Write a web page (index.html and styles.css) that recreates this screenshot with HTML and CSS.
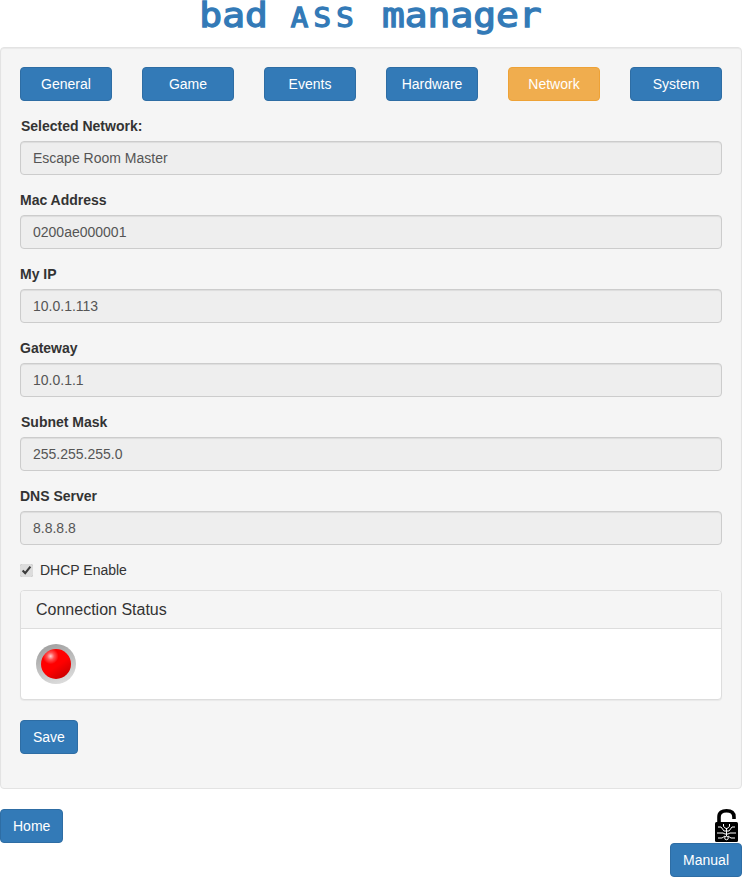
FILE: index.html
```html
<!DOCTYPE html>
<html lang="en">
<head>
<meta charset="utf-8">
<title>Bad Ass Manager</title>
<link rel="stylesheet" href="styles.css">
</head>
<body>
<h1 class="logo"><span class="logo-text">bad <span class="logo-caps">ass</span> manager</span></h1>
<main class="well">
  <nav class="tabs">
    <button class="btn" type="button">General</button>
    <button class="btn" type="button">Game</button>
    <button class="btn" type="button">Events</button>
    <button class="btn" type="button">Hardware</button>
    <button class="btn btn-active" type="button">Network</button>
    <button class="btn" type="button">System</button>
  </nav>
  <form class="form">
    <div class="group">
      <label class="label label-nudge">Selected Network:</label>
      <input class="field" type="text" value="Escape Room Master" disabled>
    </div>
    <div class="group">
      <label class="label">Mac Address</label>
      <input class="field" type="text" value="0200ae000001" disabled>
    </div>
    <div class="group">
      <label class="label">My IP</label>
      <input class="field" type="text" value="10.0.1.113" disabled>
    </div>
    <div class="group">
      <label class="label">Gateway</label>
      <input class="field" type="text" value="10.0.1.1" disabled>
    </div>
    <div class="group">
      <label class="label label-nudge">Subnet Mask</label>
      <input class="field" type="text" value="255.255.255.0" disabled>
    </div>
    <div class="group">
      <label class="label">DNS Server</label>
      <input class="field" type="text" value="8.8.8.8" disabled>
    </div>
    <label class="check">
      <input class="check-box" type="checkbox" checked>
      <span>DHCP Enable</span>
    </label>
    <section class="panel">
      <h2 class="panel-heading">Connection Status</h2>
      <div class="panel-body">
        <div class="led"><div class="led-core"></div></div>
      </div>
    </section>
    <button class="btn btn-save" type="button">Save</button>
  </form>
</main>
<footer class="footer">
  <button class="btn btn-home" type="button">Home</button>
  <div class="footer-right">
    <svg class="lock" width="23" height="33" viewBox="0 0 23 33" aria-hidden="true">
      <path d="M4 14V8C4 3.500 7 1.800 11.500 1.800S19 3.500 19 8V10" fill="none" stroke="#000" stroke-width="3.600"/>
      <rect x="0" y="13" width="23" height="20" rx="1.500" fill="#000"/>
      <g fill="none" stroke="#fff" stroke-width="1">
        <path d="M11.500 19V27"/>
        <path d="M8.500 15V17.500L11.500 20L14.500 17.500V15"/>
        <path d="M3 18H6L9 22H11.500M20 18H17L14 22H11.500"/>
        <path d="M2 24H8L10 25H11.500M21 24H15L13 25H11.500"/>
        <path d="M3 29H7L10 27M20 29H16L13 27"/>
        <circle cx="11.500" cy="29" r="1.800"/>
      </g>
    </svg>
    <button class="btn btn-manual" type="button">Manual</button>
  </div>
</footer>
</body>
</html>
```
FILE: styles.css
```css
* {
  box-sizing: border-box;
}

html,
body {
  margin: 0;
  padding: 0;
}

body {
  width: 742px;
  height: 877px;
  overflow: hidden;
  background: #fff;
  color: #333;
  font-family: "Liberation Sans", Arial, sans-serif;
  font-size: 14px;
  line-height: 20px;
}

.logo {
  height: 47px;
  margin: 0;
  color: #337ab7;
  font-family: "DejaVu Sans Mono", monospace;
  font-size: 34px;
  font-weight: 400;
  line-height: 30px;
  text-align: center;
  white-space: nowrap;
}

.logo-text {
  display: inline-block;
  -webkit-text-stroke: 1.3px #337ab7;
  transform: scaleX(1.115);
}

.logo-caps {
  font-size: 26px;
  letter-spacing: 4.8px;
  text-transform: uppercase;
}

.well {
  height: 742px;
  padding: 19px;
  background: #f5f5f5;
  border: 1px solid #e3e3e3;
  border-radius: 4px;
  box-shadow: inset 0 1px 1px rgba(0, 0, 0, .05);
}

.tabs {
  display: flex;
  justify-content: space-between;
  margin-bottom: 15px;
}

.btn {
  height: 34px;
  padding: 6px 12px;
  color: #fff;
  background: #337ab7;
  border: 1px solid #2e6da4;
  border-radius: 4px;
  font-family: inherit;
  font-size: 14px;
  line-height: 20px;
}

.tabs .btn {
  width: 92px;
}

.btn-active {
  background: #f0ad4e;
  border-color: #eea236;
}

.group {
  margin-bottom: 15px;
}

.label {
  display: block;
  margin-bottom: 5px;
  font-weight: 700;
}

.label-nudge {
  padding-left: 1px;
}

.field {
  display: block;
  width: 100%;
  height: 34px;
  padding: 6px 12px;
  color: #555;
  -webkit-text-fill-color: #555;
  opacity: 1;
  background: #eee;
  border: 1px solid #ccc;
  border-radius: 4px;
  box-shadow: inset 0 1px 1px rgba(0, 0, 0, .075);
  font-family: inherit;
  font-size: 14px;
  line-height: 20px;
}

.check {
  display: flex;
  align-items: center;
  height: 20px;
  margin: 15px 0 10px;
}

.check-box {
  width: 13px;
  height: 13px;
  margin: 0 7px 0 0;
  accent-color: #dcdcdc;
}

.panel {
  margin-bottom: 20px;
  background: #fff;
  border: 1px solid #ddd;
  border-radius: 4px;
  box-shadow: 0 1px 1px rgba(0, 0, 0, .05);
}

.panel-heading {
  height: 38px;
  margin: 0;
  padding: 10px 15px;
  color: #333;
  background: #f5f5f5;
  border-bottom: 1px solid #ddd;
  border-radius: 3px 3px 0 0;
  font-size: 16px;
  font-weight: 400;
  line-height: 18px;
}

.panel-body {
  padding: 15px;
}

.led {
  display: flex;
  align-items: center;
  justify-content: center;
  width: 40px;
  height: 40px;
  border-radius: 50%;
  background: linear-gradient(160deg, #9a9a9a, #e4e4e4);
}

.led-core {
  width: 30px;
  height: 30px;
  border-radius: 50%;
  background:
    radial-gradient(circle at 32% 24%, #ffd0d0 0, #ff5050 12%, rgba(255, 0, 0, 0) 26%),
    linear-gradient(145deg, #ff0000 55%, #b80000 100%);
}

.footer {
  display: flex;
  justify-content: space-between;
  align-items: flex-start;
  margin-top: 20px;
}

.footer-right {
  display: flex;
  flex-direction: column;
  align-items: flex-end;
}

.lock {
  display: block;
  margin: 0 4px 1px 0;
}
```
